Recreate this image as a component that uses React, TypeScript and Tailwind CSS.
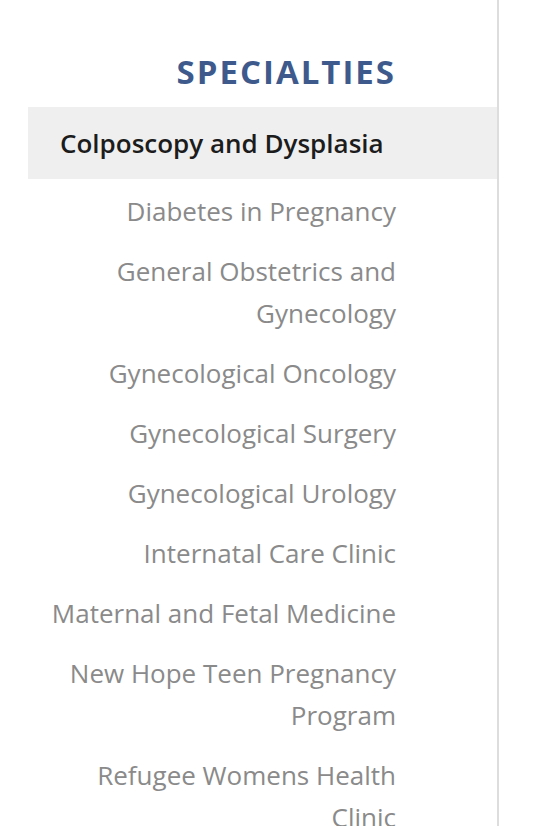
const specialties = [
  "Diabetes in Pregnancy",
  "General Obstetrics and Gynecology",
  "Gynecological Oncology",
  "Gynecological Surgery",
  "Gynecological Urology",
  "Internatal Care Clinic",
  "Maternal and Fetal Medicine",
  "New Hope Teen Pregnancy Program",
  "Refugee Womens Health Clinic",
];

function App() {
  return (
    <div className="w-[542px] h-[826px] overflow-hidden bg-white font-['Open_Sans',sans-serif]">
      <aside className="w-[499px] h-full border-r-2 border-[#dddddd] pl-[28px] pt-[53px]">
        <h2 className="pr-[101px] text-right text-[33px] leading-[38px] font-bold tracking-[2px] text-[#3e5a8c] mb-[16px]">
          SPECIALTIES
        </h2>
        <ul>
          {/* current page */}
          <li className="bg-[#efefef] py-[15px] pl-8 text-[26px] leading-[42px] font-semibold text-[#1c1c1c]">
            Colposcopy and Dysplasia
          </li>
          <li className="pt-[11px]">
            <ul className="flex flex-col gap-[18px] pr-[101px]">
              {specialties.map((name) => (
                <li
                  key={name}
                  className="text-right text-[26px] leading-[42px] text-[#8a8a8a]"
                >
                  {name}
                </li>
              ))}
            </ul>
          </li>
        </ul>
      </aside>
    </div>
  );
}

export default App;
